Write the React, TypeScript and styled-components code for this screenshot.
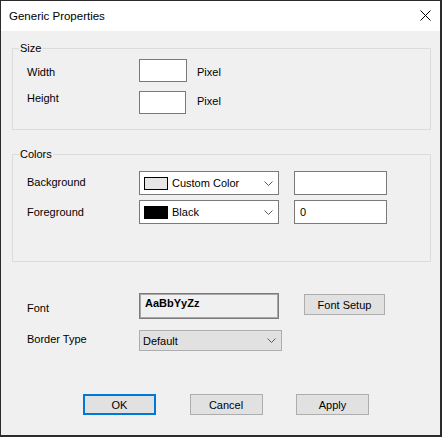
import React from "react";
import styled, { createGlobalStyle } from "styled-components";

const GlobalStyle = createGlobalStyle`
  html, body { margin: 0; padding: 0; background: #ffffff; }
  body { font-family: "Liberation Sans", Arial, sans-serif; font-size: 11px; color: #000; }
  * { box-sizing: border-box; }
`;

const Window = styled.div`
  width: 442px;
  height: 437px;
  border: 1px solid #2b2b2b;
  border-right-width: 2px;
  border-bottom-width: 2px;
  display: flex;
  flex-direction: column;
  background: #f0f0f0;
`;

const TitleBar = styled.div`
  height: 30px;
  background: #ffffff;
  display: flex;
  align-items: center;
  justify-content: space-between;
  padding: 0 9px 0 8px;
`;

const Title = styled.span`
  font-size: 11.5px;
  line-height: 16px;
  color: #000;
`;

const CloseIcon = styled.svg`
  width: 11px;
  height: 11px;
  margin-bottom: 2px;
`;

const Body = styled.div`
  flex: 1;
  display: flex;
  flex-direction: column;
  padding: 10px 0 0 11px;
`;

const Group = styled.fieldset<{ $mt?: number; $pt: number; $pb: number }>`
  margin: ${(p) => p.$mt ?? 0}px 0 0 0;
  width: 419px;
  min-width: 0;
  border: 1px solid #dcdcdc;
  padding: ${(p) => p.$pt}px 0 ${(p) => p.$pb}px 6px;
`;

const Legend = styled.legend`
  padding: 0 1px;
  line-height: 14px;
  font-size: 11px;
`;

const Rows = styled.div`
  display: flex;
  flex-direction: column;
  padding-left: 8px;
`;

const Row = styled.div<{ $h: number; $cols: string; $align?: string }>`
  display: grid;
  grid-template-columns: ${(p) => p.$cols};
  align-items: ${(p) => p.$align ?? "start"};
  height: ${(p) => p.$h}px;
`;

const Label = styled.span<{ $dy?: number }>`
  line-height: 16px;
  margin-top: ${(p) => p.$dy ?? 0}px;
  white-space: nowrap;
`;

const TextBox = styled.div<{ $w: number; $h: number }>`
  width: ${(p) => p.$w}px;
  height: ${(p) => p.$h}px;
  background: #ffffff;
  border: 1px solid #7a7a7a;
  padding-left: 5px;
  display: flex;
  align-items: center;
  line-height: 14px;
`;

const Combo = styled.div<{ $w: number; $h: number; $flat?: boolean }>`
  width: ${(p) => p.$w}px;
  height: ${(p) => p.$h}px;
  background: ${(p) => (p.$flat ? "#e1e1e1" : "#ffffff")};
  border: 1px solid ${(p) => (p.$flat ? "#adadad" : "#7a7a7a")};
  display: flex;
  align-items: center;
  padding: 0 5px 0 ${(p) => (p.$flat ? 3 : 4)}px;
  gap: 4px;
`;

const ComboText = styled.span`
  flex: 1;
  line-height: 14px;
  white-space: nowrap;
`;

const Swatch = styled.span<{ $fill: string }>`
  width: 24px;
  height: 13px;
  border: 1px solid #000;
  background: ${(p) => p.$fill};
  flex: none;
`;

const Chevron = styled.svg`
  width: 9px;
  height: 5px;
  flex: none;
`;

const Section = styled.div<{ $mt: number; $pl: number }>`
  margin-top: ${(p) => p.$mt}px;
  padding-left: ${(p) => p.$pl}px;
  display: flex;
  flex-direction: column;
`;

const FontPreview = styled.div`
  width: 140px;
  height: 26px;
  border: 1px solid #7a7a7a;
  box-shadow: inset 0 0 0 1px #a9a9a9;
  padding: 2px 0 0 5px;
  font-weight: bold;
  line-height: 14px;
`;

const Button = styled.button<{ $w: number; $focus?: boolean; $dy?: number }>`
  width: ${(p) => p.$w}px;
  height: 21px;
  margin-top: ${(p) => p.$dy ?? 0}px;
  background: #e1e1e1;
  border: ${(p) => (p.$focus ? "2px solid #0078d7" : "1px solid #adadad")};
  font-family: inherit;
  font-size: 11px;
  color: #000;
  padding: 0;
  display: flex;
  align-items: center;
  justify-content: center;
  line-height: 14px;
`;

const ButtonBar = styled.div`
  margin: 43px 0 0 71px;
  display: flex;
  gap: 33.5px;
`;

const ChevronIcon = () => (
  <Chevron viewBox="0 0 9 5">
    <path d="M0.5 0.5 L4.5 4.5 L8.5 0.5" fill="none" stroke="#5a5a5a" strokeWidth="1" />
  </Chevron>
);

export default function App() {
  return (
    <>
      <GlobalStyle />
      <Window>
        <TitleBar>
          <Title>Generic Properties</Title>
          <CloseIcon viewBox="0 0 11 11">
            <path d="M0.5 0.5 L10.5 10.5 M10.5 0.5 L0.5 10.5" stroke="#000" strokeWidth="1" fill="none" />
          </CloseIcon>
        </TitleBar>
        <Body>
          <Group $pt={4} $pb={15}>
            <Legend>Size</Legend>
            <Rows>
              <Row $h={32} $cols="112px 58px auto">
                <Label $dy={5}>Width</Label>
                <TextBox $w={48} $h={23} />
                <Label $dy={5}>Pixel</Label>
              </Row>
              <Row $h={23} $cols="112px 58px auto">
                <Label $dy={-1}>Height</Label>
                <TextBox $w={47} $h={23} />
                <Label $dy={2}>Pixel</Label>
              </Row>
            </Rows>
          </Group>

          <Group $mt={17} $pt={10} $pb={37}>
            <Legend>Colors</Legend>
            <Rows>
              <Row $h={29} $cols="112px 155px auto">
                <Label $dy={3}>Background</Label>
                <Combo $w={140} $h={24}>
                  <Swatch $fill="#e6e6e6" />
                  <ComboText>Custom Color</ComboText>
                  <ChevronIcon />
                </Combo>
                <TextBox $w={93} $h={24} />
              </Row>
              <Row $h={24} $cols="112px 155px auto">
                <Label $dy={4}>Foreground</Label>
                <Combo $w={140} $h={24}>
                  <Swatch $fill="#000000" />
                  <ComboText>Black</ComboText>
                  <ChevronIcon />
                </Combo>
                <TextBox $w={93} $h={24}>0</TextBox>
              </Row>
            </Rows>
          </Group>

          <Section $mt={31} $pl={15}>
            <Row $h={26} $cols="112px 165px auto">
              <Label $dy={7}>Font</Label>
              <FontPreview>AaBbYyZz</FontPreview>
              <Button $w={81} $dy={1}>Font Setup</Button>
            </Row>
            <Section $mt={11} $pl={0}>
              <Row $h={21} $cols="112px auto">
                <Label $dy={1}>Border Type</Label>
                <Combo $w={143} $h={21} $flat>
                  <ComboText>Default</ComboText>
                  <ChevronIcon />
                </Combo>
              </Row>
            </Section>
          </Section>

          <ButtonBar>
            <Button $w={73} $focus>OK</Button>
            <Button $w={73}>Cancel</Button>
            <Button $w={73}>Apply</Button>
          </ButtonBar>
        </Body>
      </Window>
    </>
  );
}
